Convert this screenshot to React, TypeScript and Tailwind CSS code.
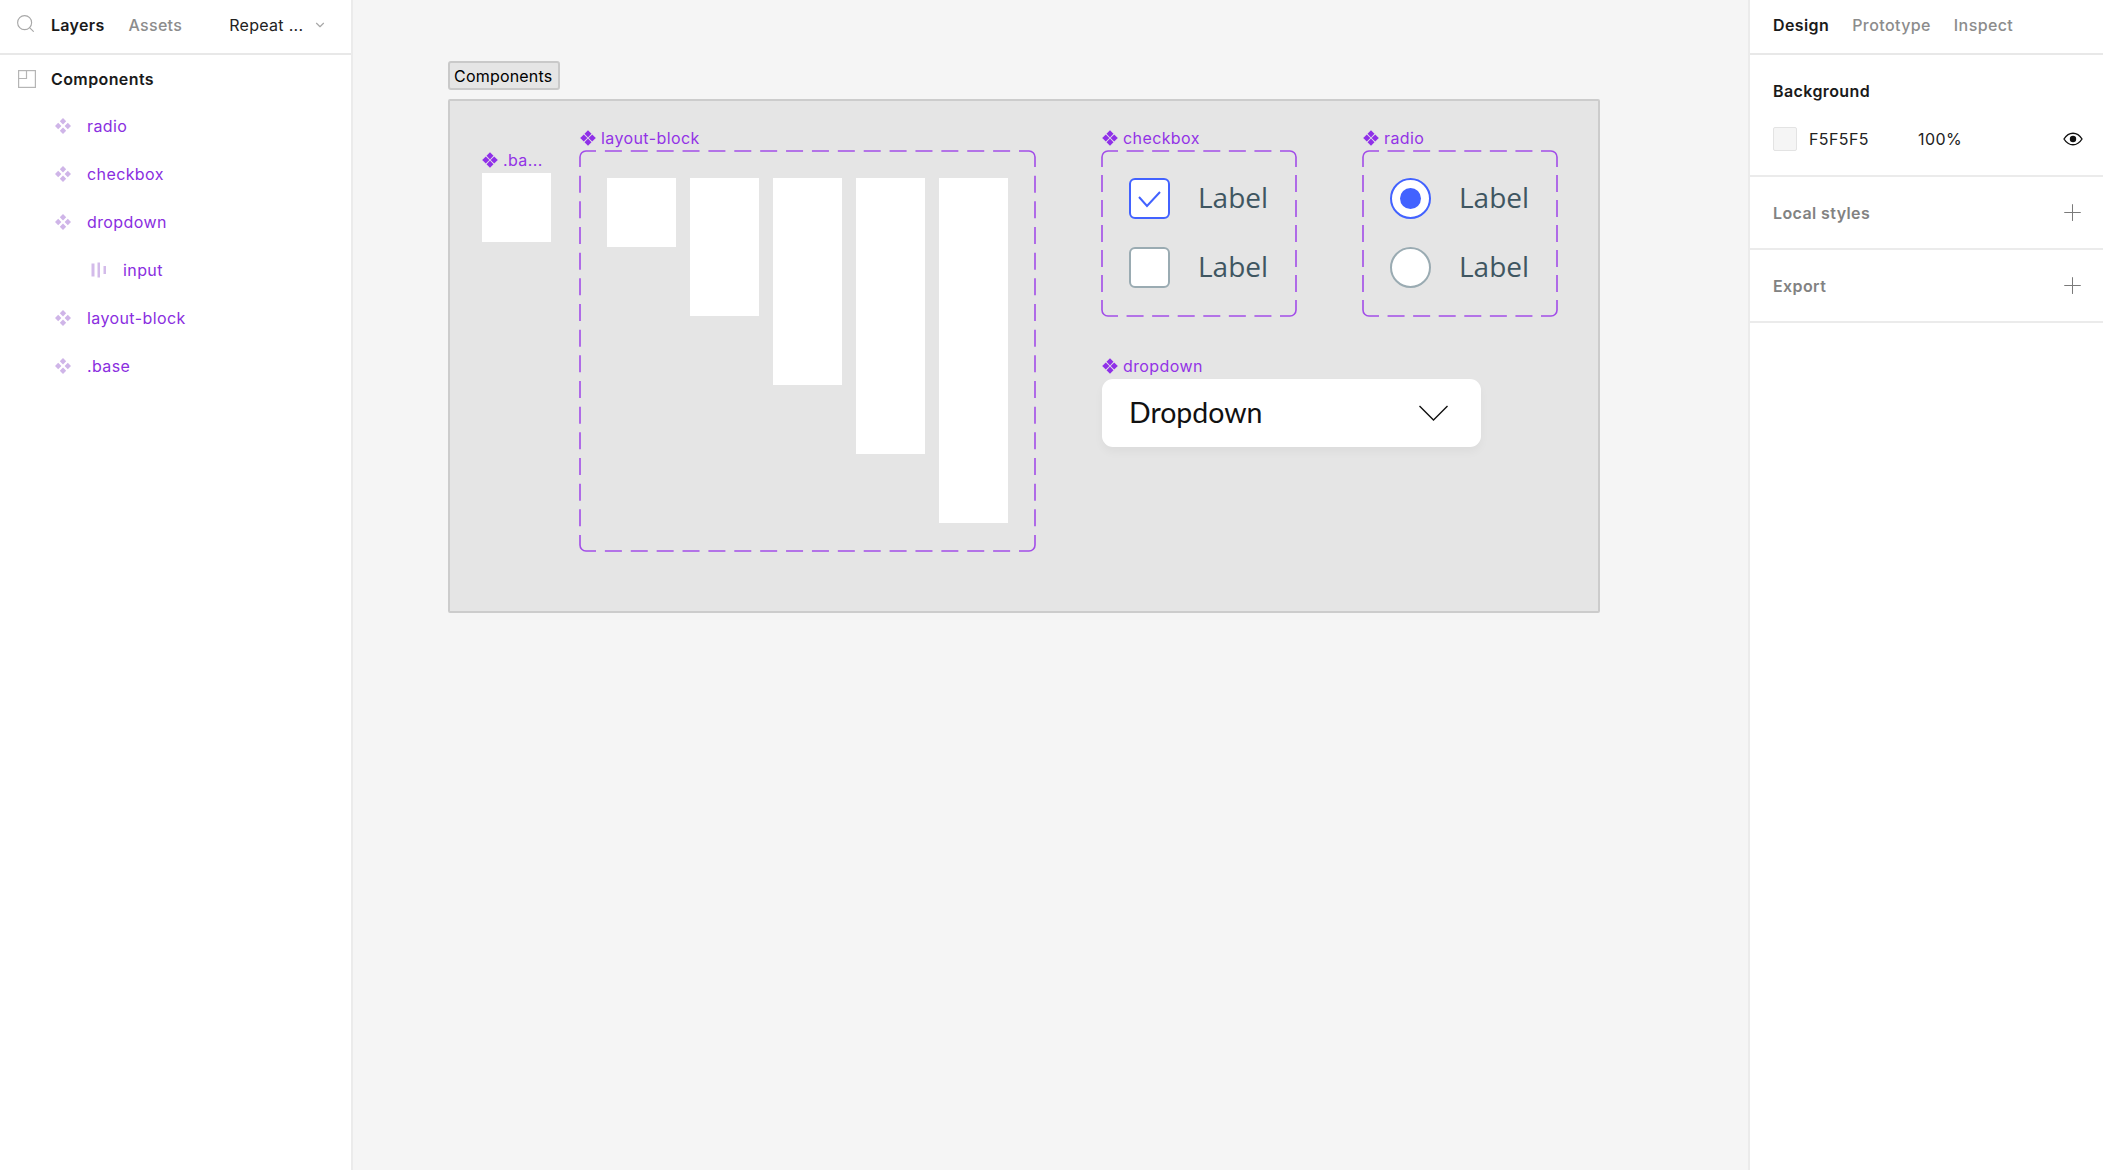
import type { ReactNode } from "react";
import { ChevronDown, Plus, Search } from "lucide-react";

const Diamond = ({ className }: { className: string }) => (
  <svg viewBox="0 0 16 16" className={className} fill="currentColor">
    <path d="M8 0.200 11.500 3.800 8 7.400 4.500 3.800Z" />
    <path d="M8 8.600 11.500 12.200 8 15.800 4.500 12.200Z" />
    <path d="M3.800 4.500 7.400 8 3.800 11.500 0.200 8Z" />
    <path d="M12.200 4.500 15.800 8 12.200 11.500 8.600 8Z" />
  </svg>
);

const PaleDiamond = () => (
  <svg viewBox="0 0 16 16" className="mr-4 h-4 w-4 text-[#cfb5e8]" fill="currentColor">
    <path d="M8 0 11.200 3.200 8 6.400 4.800 3.200Z" />
    <path d="M8 9.600 11.200 12.800 8 16 4.800 12.800Z" />
    <path d="M3.200 4.800 6.400 8 3.200 11.200 0 8Z" />
    <path d="M12.800 4.800 16 8 12.800 11.200 9.600 8Z" />
  </svg>
);

const LayerRow = ({ name, nested }: { name: string; nested?: boolean }) => (
  <div className={`flex h-12 items-center text-[16px] tracking-[0.4px] text-[#8a2ee0] ${nested ? "pl-[91px]" : "pl-[55px]"}`}>
    {nested ? (
      <svg viewBox="0 0 16 16" className="mr-4 h-4 w-4 text-[#d3bbea]" fill="currentColor">
        <rect x="0.5" y="1.5" width="3" height="13" />
        <rect x="6.5" y="0.5" width="2.5" height="15" />
        <rect x="12.5" y="4" width="2.5" height="8" />
      </svg>
    ) : (
      <PaleDiamond />
    )}
    {name}
  </div>
);

const LeftPanel = () => (
  <aside className="flex w-[353px] shrink-0 flex-col border-r-2 border-[#ebebeb] bg-white">
    <div className="flex h-[55px] items-center border-b-2 border-[#e8e8e8] pb-[4px] pl-[15px] text-[16px] tracking-[0.3px]">
      <Search className="mb-[2px] h-[21px] w-[21px] text-[#a8a8a8]" strokeWidth={1.3} />
      <span className="ml-[15px] font-semibold text-[#1a1a1a]">Layers</span>
      <span className="ml-[24px] font-medium text-[#8c8c8c]">Assets</span>
      <span className="ml-[47px] text-[#222222]">Repeat ...</span>
      <ChevronDown className="ml-[10px] h-[14px] w-[14px] text-[#a8a8a8]" />
    </div>
    <div className="flex h-[47px] items-center pl-[18px] text-[16px] font-semibold tracking-[0.4px] text-[#1a1a1a]">
      <svg viewBox="0 0 18 18" className="mr-[15px] h-[18px] w-[18px]" fill="none" stroke="#b5b5b5" strokeWidth="1.2">
        <rect x="0.6" y="0.6" width="16.8" height="16.8" />
        <path d="M0.6 8.5H8.5V0.6" />
      </svg>
      Components
    </div>
    <LayerRow name="radio" />
    <LayerRow name="checkbox" />
    <LayerRow name="dropdown" />
    <LayerRow name="input" nested />
    <LayerRow name="layout-block" />
    <LayerRow name=".base" />
  </aside>
);

const FoldedSection = ({ title }: { title: string }) => (
  <div className="flex h-[73px] items-center justify-between border-b-2 border-[#ebebeb] pl-[23px] pr-[17px]">
    <span className="text-[16px] font-semibold tracking-[0.4px] text-[#828282]">{title}</span>
    <Plus className="h-[27px] w-[27px] text-[#7a7a7a]" strokeWidth={0.9} />
  </div>
);

const RightPanel = () => (
  <aside className="flex w-[355px] shrink-0 flex-col border-l-2 border-[#ebebeb] bg-white">
    <div className="flex h-[55px] items-center gap-[23px] border-b-2 border-[#e8e8e8] pb-[4px] pl-[23px] text-[16px] font-medium tracking-[0.4px] text-[#8c8c8c]">
      <span className="font-semibold text-[#1a1a1a]">Design</span>
      <span>Prototype</span>
      <span>Inspect</span>
    </div>
    <div className="h-[122px] border-b-2 border-[#ebebeb] pl-[23px] pr-[20px] pt-[26px]">
      <div className="h-5 text-[16px] font-semibold leading-5 tracking-[0.4px] text-[#1a1a1a]">Background</div>
      <div className="mt-[26px] flex h-6 items-center text-[16px] tracking-[0.4px] text-[#222222]">
        <span className="h-6 w-6 rounded-[2px] border border-[#e3e3e3] bg-[#f5f5f5]" />
        <span className="ml-3 w-[109px]">F5F5F5</span>
        <span>100%</span>
        <svg viewBox="0 0 20 14" className="ml-auto h-[14px] w-[20px]" fill="none" stroke="#111111" strokeWidth="1.4">
          <path d="M1 7C3.5 3 6.500 1.200 10 1.200S16.500 3 19 7C16.500 11 13.500 12.800 10 12.800S3.500 11 1 7Z" />
          <circle cx="10" cy="7" r="3.200" fill="#111111" stroke="none" />
        </svg>
      </div>
    </div>
    <FoldedSection title="Local styles" />
    <FoldedSection title="Export" />
  </aside>
);

const ComponentLabel = ({ children }: { children: ReactNode }) => (
  <div className="mb-[3px] flex h-5 items-center gap-[5px] whitespace-nowrap text-[16px] tracking-[0.4px] text-[#9333e6]">
    <Diamond className="h-4 w-4 shrink-0 text-[#8f30e8]" />
    {children}
  </div>
);

// corners are solid runs, the dashes on each side are fitted in between
const DashedBox = ({ w, h, className, children }: { w: number; h: number; className: string; children: ReactNode }) => {
  const run = 16;
  const dash = 17;
  const fit = (len: number) => {
    const free = len - run * 2;
    const n = Math.round((free - 9) / (dash + 9));
    return { gap: (free - n * dash) / (n + 1) };
  };
  const a = fit(w).gap;
  const b = fit(h).gap;
  const stroke = { stroke: "#a24de8", strokeWidth: 1.6, fill: "none" };
  return (
    <div className={`relative ${className}`}>
      {children}
      <svg width={w} height={h} className="absolute left-0 top-0 overflow-visible">
        <path {...stroke} d={`M0 ${run}V6A6 6 0 0 1 6 0H${run}`} />
        <path {...stroke} d={`M${w - run} 0H${w - 6}A6 6 0 0 1 ${w} 6V${run}`} />
        <path {...stroke} d={`M${w} ${h - run}V${h - 6}A6 6 0 0 1 ${w - 6} ${h}H${w - run}`} />
        <path {...stroke} d={`M${run} ${h}H6A6 6 0 0 1 0 ${h - 6}V${h - run}`} />
        <path {...stroke} strokeDasharray={`${dash} ${a}`} strokeDashoffset={-a} d={`M${run} 0H${w - run}M${run} ${h}H${w - run}`} />
        <path {...stroke} strokeDasharray={`${dash} ${b}`} strokeDashoffset={-b} d={`M0 ${run}V${h - run}M${w} ${run}V${h - run}`} />
      </svg>
    </div>
  );
};

const FieldLabel = () => (
  <span className="mb-[4px] ml-[28px] font-['Open_Sans'] text-[28px] leading-none text-[#3f5661]">Label</span>
);

const Checkbox = ({ checked }: { checked?: boolean }) => (
  <div className={`h-[41px] w-[41px] rounded-[6px] border-2 bg-white ${checked ? "border-[#4262ff]" : "border-[#9aabb2]"}`}>
    {checked && (
      <svg viewBox="0 0 37 37" className="h-full w-full" fill="none" stroke="#4262ff" strokeWidth="2">
        <path d="M8 17 16 26 29 12" />
      </svg>
    )}
  </div>
);

const Radio = ({ checked }: { checked?: boolean }) => (
  <div
    className={`flex h-[41px] w-[41px] items-center justify-center rounded-full border-2 bg-white ${checked ? "border-[#4262ff]" : "border-[#9aabb2]"}`}
  >
    {checked && <div className="h-[21px] w-[21px] rounded-full bg-[#4262ff]" />}
  </div>
);

const barHeights = ["h-[69px]", "h-[138px]", "h-[207px]", "h-[276px]", "h-[345px]"];

const Canvas = () => (
  <main className="min-w-0 flex-1 bg-[#f5f5f5] pl-[95px] pt-[61px]">
    <div className="flex h-[29px] w-fit items-center rounded-[3px] border-2 border-[#c9c9c9] bg-[#e5e5e5] pl-1 pr-[6px] text-[16px] tracking-[0.2px] text-black">
      Components
    </div>
    <div className="mt-[9px] flex h-[514px] w-[1152px] items-start rounded-[2px] border-2 border-[#cccccc] bg-[#e5e5e5] pl-[32px] pt-[27px]">
      <div className="mt-[22px] w-[69px]">
        <ComponentLabel>
          <span>.ba...</span>
        </ComponentLabel>
        <div className="h-[69px] w-[69px] bg-white" />
      </div>
      <div className="ml-[29px]">
        <ComponentLabel>layout-block</ComponentLabel>
        <DashedBox w={455} h={400} className="flex h-[400px] w-[455px] items-start gap-[14px] pl-[27px] pt-[27px]">
          {barHeights.map((h) => (
            <div key={h} className={`w-[69px] bg-white ${h}`} />
          ))}
        </DashedBox>
      </div>
      <div className="ml-[67px]">
        <div className="flex gap-[67px]">
          <div>
            <ComponentLabel>checkbox</ComponentLabel>
            <DashedBox w={194} h={165} className="flex h-[165px] w-[194px] flex-col gap-[28px] pl-[27px] pt-[27px]">
              <div className="flex items-center">
                <Checkbox checked />
                <FieldLabel />
              </div>
              <div className="flex items-center">
                <Checkbox />
                <FieldLabel />
              </div>
            </DashedBox>
          </div>
          <div>
            <ComponentLabel>radio</ComponentLabel>
            <DashedBox w={194} h={165} className="flex h-[165px] w-[194px] flex-col gap-[28px] pl-[27px] pt-[27px]">
              <div className="flex items-center">
                <Radio checked />
                <FieldLabel />
              </div>
              <div className="flex items-center">
                <Radio />
                <FieldLabel />
              </div>
            </DashedBox>
          </div>
        </div>
        <div className="mt-10">
          <ComponentLabel>dropdown</ComponentLabel>
          <div className="flex h-[68px] w-[379px] items-center justify-between rounded-[11px] bg-white pl-[27px] pr-[33px] shadow-[0_5px_10px_rgba(0,0,0,0.04)]">
            <span className="mb-[2px] font-['Lato'] text-[28.5px] text-[#111111]">Dropdown</span>
            <svg viewBox="0 0 29 16" className="h-4 w-[29px]" fill="none" stroke="#111111" strokeWidth="1.4">
              <path d="M0.500 1 14.500 15 28.500 1" />
            </svg>
          </div>
        </div>
      </div>
    </div>
  </main>
);

const App = () => (
  <div className="flex h-screen w-full overflow-hidden font-['Inter',sans-serif]">
    <LeftPanel />
    <Canvas />
    <RightPanel />
  </div>
);

export default App;
